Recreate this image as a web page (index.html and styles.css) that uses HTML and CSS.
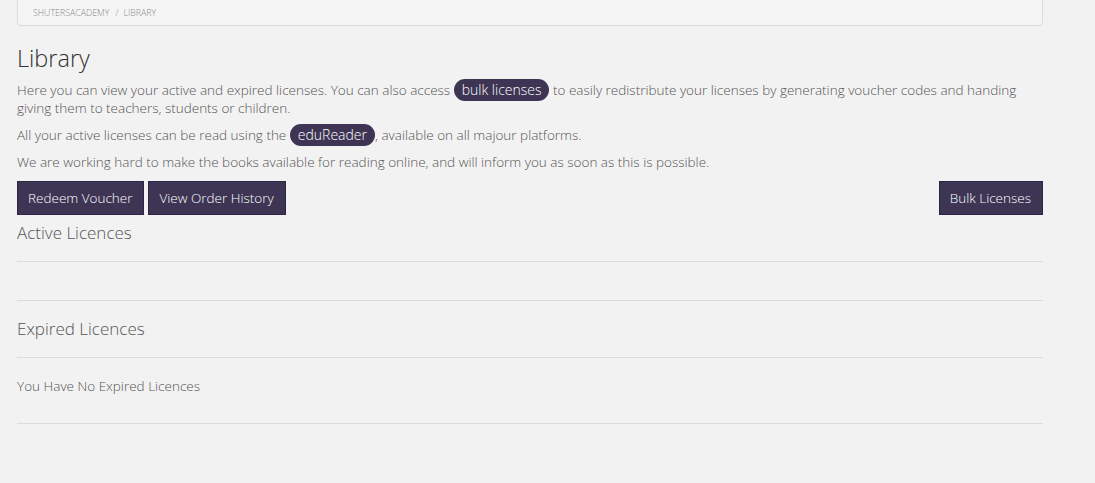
FILE: index.html
```html
<!DOCTYPE html>
<html lang="en">
<head>
    <meta charset="UTF-8">
    <meta name="viewport" content="width=device-width, initial-scale=1.0">
    <title>Library</title>
    <link rel="stylesheet" href="styles.css">
</head>
<body>

<div class="container">
    <ol class="breadcrumb">
        <li>ShutersAcademy</li>
        <li>Library</li>
    </ol>

    <h1 class="page-title">Library</h1>

    <p>Here you can view your active and expired licenses. You can also access <span class="tag">bulk licenses</span> to easily redistribute your licenses by generating voucher codes and handing giving them to teachers, students or children.</p>
    <p>All your active licenses can be read using the <span class="tag">eduReader</span>, available on all majour platforms.</p>
    <p>We are working hard to make the books available for reading online, and will inform you as soon as this is possible.</p>

    <div class="actions">
        <button class="btn">Redeem Voucher</button>
        <button class="btn">View Order History</button>
        <button class="btn btn-right">Bulk Licenses</button>
    </div>

    <h3 class="section-title first">Active Licences</h3>
    <hr>
    <div class="empty-list"></div>
    <hr>

    <h3 class="section-title">Expired Licences</h3>
    <hr>
    <p class="empty-note">You Have No Expired Licences</p>
    <hr>
</div>

</body>
</html>
```

FILE: styles.css
```css
body {
    margin: 0;
    background-color: #f2f2f2;
    font-family: "Open Sans", Arial, sans-serif;
    font-weight: 300;
    color: #555;
}
.container {
    width: 1026px;
    margin-left: 17px;
}
.breadcrumb {
    list-style: none;
    margin: 0;
    padding: 8px 15px 7px;
    height: 10px;
    background-color: #f5f5f5;
    border: 1px solid #dcdcdc;
    border-top: none;
    border-radius: 0 0 4px 4px;
    font-size: 8.8px;
    line-height: 10px;
    text-transform: uppercase;
    color: #888;
}
.breadcrumb li {
    display: inline;
}
.breadcrumb li + li:before {
    content: "/";
    padding: 0 5px 0 4px;
}
.page-title {
    font-size: 23.5px;
    font-weight: 300;
    color: #333;
    line-height: 28px;
    margin: 18px 0 9px;
}
p {
    font-size: 13.5px;
    line-height: 18px;
    margin: 0 0 9px;
}
.tag {
    display: inline-block;
    background-color: #3d3553;
    color: #fff;
    font-size: 14px;
    padding: 2px 8px;
    border-radius: 11px;
    line-height: 18px;
    margin: -2px 0;
}
.actions {
    display: flex;
    gap: 4px;
    margin-top: 10px;
}
.btn {
    font-family: "Open Sans", Arial, sans-serif;
    font-size: 13.5px;
    font-weight: 300;
    color: #fff;
    background-color: #3d3553;
    border: 1px solid #2c2545;
    height: 34px;
    padding: 0 11px 0 10px;
    cursor: pointer;
}
.btn-right {
    margin-left: auto;
}
.section-title {
    font-size: 17px;
    font-weight: 300;
    color: #555;
    line-height: 22px;
    margin: 17px 0 0;
}
.section-title.first {
    margin-top: 7px;
}
hr {
    border: 0;
    border-top: 1px solid #dcdcdc;
    margin: 17px 0;
}
.empty-list {
    height: 4px;
}
.empty-note {
    font-size: 13.5px;
    margin: 0;
    padding: 2px 0 11px;
}
```
